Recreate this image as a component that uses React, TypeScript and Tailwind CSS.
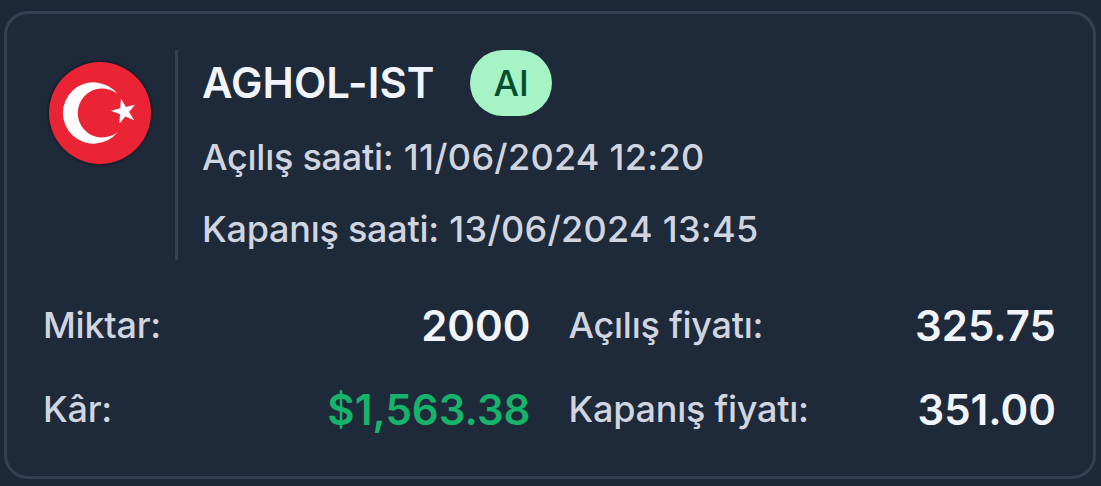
const trade = {
  symbol: 'AGHOL-IST',
  tag: 'AI',
  times: [
    { label: 'Açılış saati:', value: '11/06/2024 12:20' },
    { label: 'Kapanış saati:', value: '13/06/2024 13:45' },
  ],
  stats: [
    { label: 'Miktar:', value: '2000', color: 'text-[#f2f4fb]' },
    { label: 'Açılış fiyatı:', value: '325.75', color: 'text-[#f2f4fb]' },
    { label: 'Kâr:', value: '$1,563.38', color: 'text-[#16b36b]' },
    { label: 'Kapanış fiyatı:', value: '351.00', color: 'text-[#f2f4fb]' },
  ],
}

function TurkeyFlag() {
  return (
    <svg viewBox="0 0 104 104" className="mt-[11px] ml-[5px] h-[104px] w-[104px] flex-shrink-0 overflow-visible">
      <circle cx="52" cy="52" r="53.5" fill="#171f2c" fillOpacity="0.5" />
      <circle cx="52" cy="52" r="52" fill="#171f2c" />
      <circle cx="52" cy="52" r="51" fill="#eb2435" />
      <path d="M69.7 33A30.7 30.7 0 1 0 69.7 71A24.5 24.5 0 1 1 69.7 33Z" fill="#fff" />
      <path
        d="M63 49.7L72.2 47.3L73 37.7L77.9 46L87 43.7L81.1 50.9L86.3 59.3L77.3 55.5L71.3 62.7L72 53.2Z"
        fill="#fff"
      />
    </svg>
  )
}

export default function App() {
  return (
    <div className="h-[486px] w-[1101px] bg-[#1d2838] pt-[11px] pl-1 font-['Inter',sans-serif] text-[36px] leading-[54px] font-medium text-[#d0d5e0]">
      <div className="h-[468px] w-[1092px] rounded-[24px] border-[3px] border-[#354052] bg-[#1e2939] pt-9 pr-[37px] pl-9">
        {/* Header */}
        <div className="flex h-[210px]">
          <TurkeyFlag />
          <div className="ml-[23px] flex-1 border-l-[3px] border-[#354052] pl-[24px]">
            <div className="flex h-[66px] items-center">
              <h1 className="text-[42px] font-semibold tracking-[0.1px] text-[#f2f4fb]">{trade.symbol}</h1>
              <span className="ml-[35px] flex h-[66px] w-[82px] items-center justify-center rounded-full bg-[#a6f4c5] pl-px text-[#054f31]">
                {trade.tag}
              </span>
            </div>
            {trade.times.map((time) => (
              <p key={time.label} className="mt-[14px] mb-[18px] h-[54px] whitespace-nowrap">
                <span className="mr-px tracking-[-0.25px]">{time.label} </span>
                <span className="tracking-[0.28px]">{time.value}</span>
              </p>
            ))}
          </div>
        </div>

        {/* Amounts and prices */}
        <div className="mt-[36px] grid grid-cols-2 gap-x-[38px] gap-y-[24px]">
          {trade.stats.map((stat) => (
            <div key={stat.label} className="flex h-[60px] items-center justify-between">
              <span className="pb-0.5 tracking-[-0.25px]">{stat.label}</span>
              <span className={`text-[42px] font-semibold ${stat.color}`}>{stat.value}</span>
            </div>
          ))}
        </div>
      </div>
    </div>
  )
}
